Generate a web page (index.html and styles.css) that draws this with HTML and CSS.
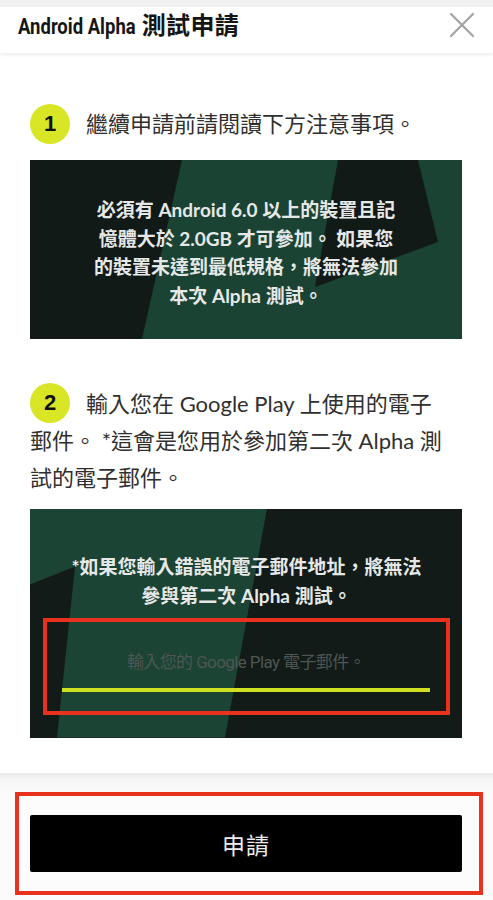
FILE: index.html
```html
<!DOCTYPE html>
<html lang="zh-Hant">
<head>
<meta charset="utf-8">
<title>Android Alpha 測試申請</title>
<link rel="stylesheet" href="styles.css">
</head>
<body>
<div class="modal">
  <header class="hdr">
    <h1 class="title"><span class="lat">Android Alpha</span> 測試申請</h1>
    <button class="close" aria-label="關閉">
      <svg viewBox="0 0 26 26" width="26" height="26"><path d="M2 2L24 24M24 2L2 24" stroke="#a3a3a3" stroke-width="2.2" stroke-linecap="round" fill="none"/></svg>
    </button>
  </header>
  <main class="body">
    <div class="step step1"><span class="num">1</span><span>繼續申請前請閱讀下方注意事項。</span></div>
    <div class="panel panel1">
      <p class="panel-text">必須有 Android 6.0 以上的裝置且記憶體大於 2.0GB 才可參加。 如果您的裝置未達到最低規格，將無法參加本次 Alpha 測試。</p>
    </div>
    <div class="step2"><span class="num num-float">2</span><p class="step2-text">輸入您在 Google Play 上使用的電子郵件。 *這會是您用於參加第二次 Alpha 測試的電子郵件。</p></div>
    <div class="panel panel2">
      <p class="panel-text">*如果您輸入錯誤的電子郵件地址，將無法參與第二次 Alpha 測試。</p>
      <div class="mark mark-field">
        <div class="field"><input class="email" type="email" placeholder="輸入您的 Google Play 電子郵件。"></div>
      </div>
    </div>
  </main>
  <footer class="foot">
    <div class="mark mark-btn"><button class="submit">申請</button></div>
  </footer>
</div>
</body>
</html>
```

FILE: styles.css
```css
* { box-sizing: border-box; margin: 0; padding: 0; }
html, body { width: 493px; height: 900px; overflow: hidden; background: #fff; }
body { font-family: "Lato", "Noto Sans CJK TC", sans-serif; color: #2e2e2e; }

.modal { display: flex; flex-direction: column; height: 900px; }

.hdr {
  flex: none; height: 53px;
  display: flex; align-items: center; justify-content: space-between;
  padding: 0 18px 3px 18px;
  background: linear-gradient(#f1f1f1 0, #f1f1f1 7px, #fff 7px);
  box-shadow: 0 2px 3px rgba(0,0,0,.07);
  position: relative; z-index: 1;
}
.title {
  font-family: "Noto Sans CJK TC", sans-serif;
  font-size: 24px; font-weight: 700; color: #151515; line-height: 1;
  letter-spacing: 0.3px;
}
.title .lat {
  display: inline-block;
  font-family: "Roboto", sans-serif; font-weight: 700;
  font-size: 22px; letter-spacing: 0;
  transform: scaleX(0.84); transform-origin: 0 50%;
  margin-right: -22px;
}
.close { width: 26px; height: 26px; border: 0; background: none; display: block; }
.close svg { display: block; }

.body { flex: 1; padding: 51px 31px 0 30px; }

.num {
  width: 40px; height: 40px; border-radius: 50%;
  background: #d9e625; color: #111;
  font-family: "Liberation Sans", sans-serif; font-weight: 700; font-size: 22px;
  display: flex; align-items: center; justify-content: center; flex: none;
}
.step { display: flex; align-items: center; gap: 16px; font-size: 22px; line-height: 40px; color: #2f2f2f; }

.step2 { margin-top: 46px; width: 414px; }
.num-float { float: left; margin: -2px 16px -4px 0; }
.step2-text { font-size: 22px; line-height: 37px; color: #2f2f2f; }

.panel { position: relative; overflow: hidden; background: #111a17; color: #ececec; }
.panel::before, .panel::after { content: ""; position: absolute; inset: 0; }
.panel > * { position: relative; z-index: 1; }
.panel-text { margin: 0 auto; text-align: center; font-size: 19px; font-weight: 700; color: #e6e8e7; }

.panel1 { height: 179px; margin-top: 16px; padding-top: 36px; }
.panel1::before { background: #1a4333; clip-path: polygon(152px 0, 432px 0, 432px 179px, 112px 179px); }
.panel1::after { background: #111a17; clip-path: polygon(308px 0, 388px 0, 408px 82px, 285px 127px); }
.panel1 .panel-text { width: 310px; line-height: 28.5px; }

.panel2 { height: 229px; margin-top: 12.5px; padding: 43.5px 12px 0 13px; background: #121b18; }
.panel2::before { background: #1c4434; clip-path: polygon(0 0, 237px 0, 195px 229px, 27px 229px, 45px 58px, 0 76px); }
.panel2::after { display: none; }
.panel2 .panel-text { width: 360px; line-height: 29px; }

.mark { border: 4px solid #e9321d; }
.mark-field { margin-top: 7.5px; height: 97px; }
.field { padding: 28px 16px 0 15px; }
.email {
  display: block; width: 100%; height: 42px;
  background: transparent; border: 0; border-bottom: 4px solid #cfe021;
  padding: 0 0 14px; outline: none;
  text-align: center; color: #ddd;
  font-family: "Roboto", "Noto Sans CJK TC", sans-serif; font-size: 17px; letter-spacing: -0.6px;
}
.email::placeholder { color: #4d5652; opacity: 1; }

.foot {
  flex: none; padding: 19px 10px 5px 15px;
  background: linear-gradient(#e9e9e9 0, #f6f6f6 6px, #fbfbfb 20px);
}
.mark-btn { padding: 19px 17px 19px 11px; background: #fcfcfc; }
.submit {
  display: block; width: 100%; height: 57px;
  background: #000; color: #ededed; border: 0; border-radius: 2px;
  font-family: "Noto Sans CJK TC", sans-serif; font-size: 23px; letter-spacing: 1px;
}
```
